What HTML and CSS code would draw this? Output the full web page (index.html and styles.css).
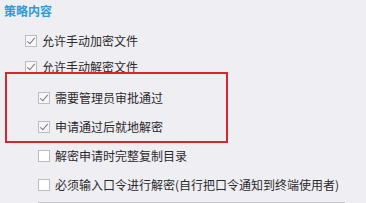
FILE: index.html
```html
<!DOCTYPE html>
<html lang="en">
<head>
    <meta charset="UTF-8">
    <title>策略内容</title>
    <link rel="stylesheet" href="styles.css">
</head>
<body>
    <div class="panel">
        <h3 class="title">策略内容</h3>
        <div class="options">
            <label class="row">
                <input type="checkbox" checked>
                <span>允许手动加密文件</span>
            </label>
            <label class="row">
                <input type="checkbox" checked>
                <span>允许手动解密文件</span>
            </label>

            <div class="sub">
                <label class="row">
                    <input type="checkbox" checked>
                    <span>需要管理员审批通过</span>
                </label>
                <label class="row">
                    <input type="checkbox" checked>
                    <span>申请通过后就地解密</span>
                </label>
                <label class="row">
                    <input type="checkbox">
                    <span>解密申请时完整复制目录</span>
                </label>
                <label class="row">
                    <input type="checkbox">
                    <span>必须输入口令进行解密(自行把口令通知到终端使用者)</span>
                </label>
                <div class="pwd"></div>
            </div>
        </div>

        <div class="highlight"></div>
    </div>
</body>
</html>
```

FILE: styles.css
```css
body{
    margin: 0;
    background-color: #efeef3;
    font-family: "Noto Sans CJK SC", "Noto Sans", sans-serif;
    font-size: 12px;
    color: #2b2b2b;
}

.panel{
    position: relative;
    height: 203px;
    overflow: hidden;
}

.title{
    margin: 0;
    padding: 3px 4px;
    line-height: 16px;
    font-size: 12px;
    font-weight: bold;
    color: #2b9bd9;
}

.options{
    margin-top: 10px;
    padding-left: 25px;
}

.row{
    display: flex;
    align-items: center;
    gap: 5px;
    height: 18px;
    line-height: 18px;
    white-space: nowrap;
}

.row + .row{
    margin-top: 8px;
}

.sub{
    margin-top: 13px;
    padding-left: 13px;
}

.sub .row + .row{
    margin-top: 11px;
}

.row input{
    appearance: none;
    -webkit-appearance: none;
    margin: 0;
    width: 12px;
    height: 12px;
    box-sizing: border-box;
    border: 1px solid #bcbcc0;
    background-color: #fff;
    position: relative;
}

.row input:checked{
    background-color: #f7f7f8;
}

.row input:checked::after{
    content: "";
    position: absolute;
    left: 3px;
    top: 0px;
    width: 3px;
    height: 7px;
    border: solid #7a7a7e;
    border-width: 0 1.5px 1.5px 0;
    transform: rotate(40deg);
}

.pwd{
    margin-top: 8px;
    width: 307px;
    height: 10px;
    border-top: 1px solid #c6c6cc;
    background-color: #f3f3f5;
}

.highlight{
    position: absolute;
    left: 5px;
    top: 72px;
    width: 223px;
    height: 71px;
    box-sizing: border-box;
    border: 2px solid #d8262e;
}
```
